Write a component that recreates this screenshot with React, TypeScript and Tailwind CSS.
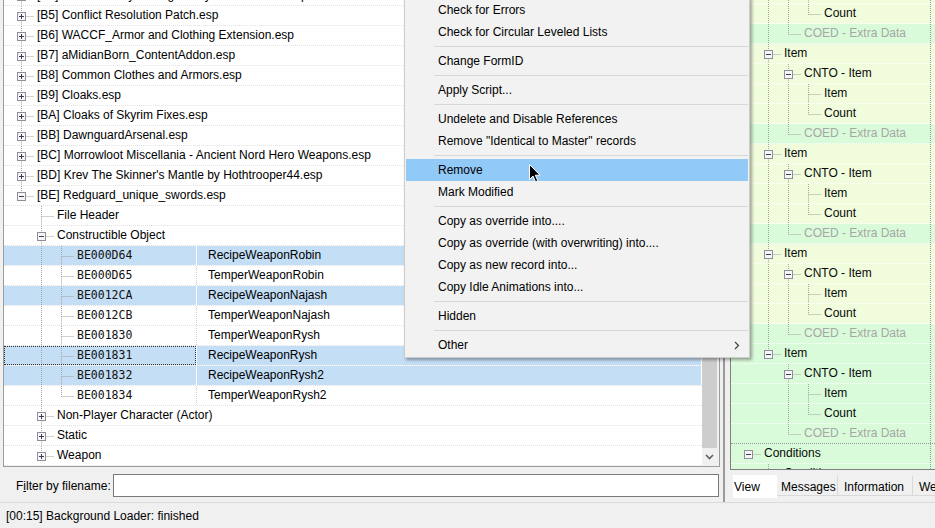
import React from "react";

type TRow = {
  l: number;
  t: string;
  box?: "plus" | "minus";
  last?: boolean;
  cont?: boolean[];
  noTop?: boolean;
  ed?: string;
  sel?: boolean;
  focus?: boolean;
  gray?: boolean;
  green?: boolean;
  sepDark?: boolean;
};

function Gutter({ r }: { r: TRow }) {
  const w = 33 + r.l * 20;
  const h = 19;
  const ci = (lv: number) => 17 + lv * 20;
  const cx = (lv: number) => ci(lv) + 0.5;
  const my = 10.5;
  const segs: React.ReactNode[] = [];
  (r.cont || []).forEach((c, i) => {
    if (c) segs.push(<line key={`c${i}`} x1={cx(i)} y1={0} x2={cx(i)} y2={h} />);
  });
  const x = cx(r.l);
  if (!r.noTop) segs.push(<line key="t" x1={x} y1={0} x2={x} y2={my} />);
  if (!r.last) segs.push(<line key="b" x1={x} y1={my} x2={x} y2={h} />);
  segs.push(<line key="h" x1={x} y1={my} x2={w - 3} y2={my} />);
  const c = ci(r.l);
  return (
    <svg width={w} height={h} className="shrink-0 block">
      <g stroke="#a3a3a3" strokeWidth={1} strokeDasharray="1 1">
        {segs}
      </g>
      {r.box && (
        <g>
          <rect x={c - 3.5} y={6.5} width={8} height={8} fill="#f6f6f6" stroke="#8e8f9a" />
          <line x1={c - 2} y1={my} x2={c + 3} y2={my} stroke="#3c3c5a" />
          {r.box === "plus" && <line x1={x} y1={8} x2={x} y2={13} stroke="#3c3c5a" />}
        </g>
      )}
    </svg>
  );
}

const rec = (t: string, ed: string, extra: Partial<TRow> = {}): TRow => ({
  l: 2,
  t,
  ed,
  cont: [false, true],
  ...extra,
});

const leftRows: TRow[] = [
  { l: 0, t: "[B4] Unofficial Skyrim Legendary Edition Patch.esp", box: "plus" },
  { l: 0, t: "[B5] Conflict Resolution Patch.esp", box: "plus" },
  { l: 0, t: "[B6] WACCF_Armor and Clothing Extension.esp", box: "plus" },
  { l: 0, t: "[B7] aMidianBorn_ContentAddon.esp", box: "plus" },
  { l: 0, t: "[B8] Common Clothes and Armors.esp", box: "plus" },
  { l: 0, t: "[B9] Cloaks.esp", box: "plus" },
  { l: 0, t: "[BA] Cloaks of Skyrim Fixes.esp", box: "plus" },
  { l: 0, t: "[BB] DawnguardArsenal.esp", box: "plus" },
  { l: 0, t: "[BC] Morrowloot Miscellania - Ancient Nord Hero Weapons.esp", box: "plus" },
  { l: 0, t: "[BD] Krev The Skinner's Mantle by Hothtrooper44.esp", box: "plus" },
  { l: 0, t: "[BE] Redguard_unique_swords.esp", box: "minus", last: true },
  { l: 1, t: "File Header", cont: [false] },
  { l: 1, t: "Constructible Object", box: "minus", cont: [false] },
  rec("BE000D64", "RecipeWeaponRobin", { sel: true }),
  rec("BE000D65", "TemperWeaponRobin"),
  rec("BE0012CA", "RecipeWeaponNajash", { sel: true }),
  rec("BE0012CB", "TemperWeaponNajash"),
  rec("BE001830", "TemperWeaponRysh"),
  rec("BE001831", "RecipeWeaponRysh", { sel: true, focus: true }),
  rec("BE001832", "RecipeWeaponRysh2", { sel: true }),
  rec("BE001834", "TemperWeaponRysh2", { last: true }),
  { l: 1, t: "Non-Player Character (Actor)", box: "plus", cont: [false] },
  { l: 1, t: "Static", box: "plus", cont: [false] },
  { l: 1, t: "Weapon", box: "plus", cont: [false], last: true },
];

function group(li: boolean, green: boolean): TRow[] {
  return [
    { l: 1, t: "Item", box: "minus", cont: [false], last: li, green },
    { l: 2, t: "CNTO - Item", box: "minus", cont: [false, !li], green },
    { l: 3, t: "Item", cont: [false, !li, true], green },
    { l: 3, t: "Count", cont: [false, !li, true], last: true, green },
    { l: 2, t: "COED - Extra Data", cont: [false, !li], last: true, gray: true, green: true, sepDark: li },
  ];
}

const rightRows: TRow[] = [
  { l: 3, t: "Item", cont: [false, true, true] },
  { l: 3, t: "Count", cont: [false, true, true], last: true },
  { l: 2, t: "COED - Extra Data", cont: [false, true], last: true, gray: true, green: true },
  ...group(false, false),
  ...group(false, false),
  ...group(false, false),
  ...group(true, true),
  { l: 0, t: "Conditions", box: "minus", noTop: true, last: true, green: true },
  { l: 1, t: "Condition", box: "minus", cont: [false], green: true },
];

function LeftRow({ r }: { r: TRow }) {
  const isRec = r.ed !== undefined;
  let c1 = "w-[192px] shrink-0 flex items-center";
  if (r.sel && r.focus) c1 = "w-[192px] shrink-0 flex items-center bg-[#c4def5] outline-1 outline-dotted outline-[#333333] -outline-offset-1";
  else if (r.sel) c1 = "w-[192px] shrink-0 flex items-center bg-[#c4def5]";
  return (
    <div className="h-[20px] flex border-b border-dotted border-[#e2e2e2]">
      <div className={c1}>
        <Gutter r={r} />
        <span
          className={
            isRec
              ? "whitespace-nowrap font-['DejaVu_Sans_Mono',monospace] text-[11.5px] text-[#111111]"
              : "whitespace-nowrap"
          }
        >
          {r.t}
        </span>
      </div>
      {isRec && (
        <>
          <div
            className={
              r.sel ? "w-[1px] shrink-0 bg-white" : "w-[1px] shrink-0 border-l border-dotted border-[#cfcfcf]"
            }
          />
          <div
            className={
              r.sel
                ? "flex-1 mr-[1px] pl-[11px] flex items-center whitespace-nowrap bg-[#c4def5]"
                : "flex-1 mr-[1px] pl-[11px] flex items-center whitespace-nowrap"
            }
          >
            {r.ed}
          </div>
        </>
      )}
    </div>
  );
}

function RightRow({ r }: { r: TRow }) {
  let cls = "h-[20px] flex border-b border-dotted border-white bg-[#f0fcdc]";
  if (r.green && r.sepDark) cls = "h-[20px] flex border-b border-dotted border-[#9a9a9a] bg-[#d9fbd9]";
  else if (r.green) cls = "h-[20px] flex border-b border-dotted border-white bg-[#d9fbd9]";
  return (
    <div className={cls}>
      <div className="w-[200px] shrink-0 flex items-center border-r border-dotted border-[#9a9a9a]">
        <Gutter r={r} />
        <span className={r.gray ? "whitespace-nowrap text-[#a6a6a6]" : "whitespace-nowrap text-[#0a0a0a]"}>
          {r.t}
        </span>
      </div>
      <div className="flex-1" />
    </div>
  );
}

const menuItems: (string | null)[] = [
  "Check for Errors",
  "Check for Circular Leveled Lists",
  null,
  "Change FormID",
  null,
  "Apply Script...",
  null,
  "Undelete and Disable References",
  'Remove "Identical to Master" records',
  null,
  "Remove",
  "Mark Modified",
  null,
  "Copy as override into....",
  "Copy as override (with overwriting) into....",
  "Copy as new record into...",
  "Copy Idle Animations into...",
  null,
  "Hidden",
  null,
  "Other",
];

function Menu() {
  return (
    <div className="absolute left-[404px] top-[-3px] w-[346px] bg-[#f2f2f2] border border-[#cccccc] p-[1px] shadow-[2px_2px_3px_rgba(0,0,0,0.35)] text-[12px] text-black">
      {menuItems.map((m, i) =>
        m === null ? (
          <div key={i} className="h-[7px] flex items-center pl-[28px]">
            <div className="h-[1px] flex-1 bg-[#d7d7d7]" />
          </div>
        ) : (
          <div
            key={i}
            className={
              m === "Remove"
                ? "h-[22px] pl-[32px] pr-[8px] leading-[22px] flex items-center justify-between bg-[#91c9f7]"
                : "h-[22px] pl-[32px] pr-[8px] leading-[22px] flex items-center justify-between"
            }
          >
            <span className="whitespace-nowrap">{m}</span>
            {m === "Other" && (
              <svg width="6" height="9" viewBox="0 0 6 9">
                <polyline points="1,1 4.5,4.5 1,8" fill="none" stroke="#404040" strokeWidth="1.2" />
              </svg>
            )}
          </div>
        )
      )}
    </div>
  );
}

function Cursor() {
  return (
    <svg className="absolute left-[529px] top-[164px]" width="13" height="20" viewBox="0 0 13 20">
      <path
        d="M0.5 0.5 L0.5 15.5 L4 12 L6.5 17.8 L8.8 16.8 L6.3 11.2 L11 11.2 Z"
        fill="#000000"
        stroke="#ffffff"
        strokeWidth="1"
        strokeLinejoin="miter"
      />
    </svg>
  );
}

export default function App() {
  return (
    <div className="relative w-[935px] h-[528px] overflow-hidden bg-[#f0f0f0] font-['Liberation_Sans',Arial,sans-serif] text-[12px] leading-[19px] text-black">
      <div className="flex h-[502px]">
        {/* Left column */}
        <div className="w-[720px] shrink-0 flex flex-col pl-[3px]">
          <div className="h-[467px] shrink-0 flex bg-white border-l border-r border-b border-[#9c9c9c] overflow-hidden">
            <div className="flex-1 overflow-hidden">
              <div className="mt-[-14px]">
                {leftRows.map((r, i) => (
                  <LeftRow key={i} r={r} />
                ))}
              </div>
            </div>
            <div className="w-[17px] shrink-0 flex flex-col bg-[#f0f0f0]">
              <div className="flex-1 w-[15px] bg-[#cdcdcd]" />
              <div className="h-[18px] flex items-center justify-center pr-[2px]">
                <svg width="9" height="6" viewBox="0 0 9 6">
                  <polyline points="1,1 4.5,4.5 8,1" fill="none" stroke="#606060" strokeWidth="1.6" />
                </svg>
              </div>
            </div>
          </div>
          <div className="flex items-start pt-[7px]">
            <div className="ml-[13px] w-[97px] h-[24px] flex items-center whitespace-nowrap">
              F<span className="underline">i</span>lter by filename:
            </div>
            <div className="w-[606px] h-[23px] bg-white border border-[#7a7a7a]" />
          </div>
        </div>

        {/* Right column */}
        <div className="flex-1 flex pl-[3px]">
          <div className="flex-1 flex flex-col border-l-2 border-[#9a9a9a] pl-[5px]">
            <div className="h-[470px] shrink-0 border-l border-b border-[#7f7f7f] overflow-hidden">
              <div className="mt-[-16px]">
                {rightRows.map((r, i) => (
                  <RightRow key={i} r={r} />
                ))}
              </div>
            </div>
            <div className="flex items-start mt-[4px] ml-[3px] h-[24px]">
              <div className="w-[44px] h-[23px] mt-[1px] bg-white pl-[1px] pt-[3px] leading-[19px] whitespace-nowrap">
                View
              </div>
              <div className="w-[61px] h-[20px] mt-[2px] pl-[4px] pt-[1px] leading-[20px] border-r border-b border-[#d9d9d9] whitespace-nowrap">
                Messages
              </div>
              <div className="w-[75px] h-[20px] mt-[2px] pl-[6px] pt-[1px] leading-[20px] border-r border-b border-[#d9d9d9] whitespace-nowrap">
                Information
              </div>
              <div className="w-[60px] h-[20px] mt-[2px] pl-[6px] pt-[1px] leading-[20px] border-b border-[#d9d9d9] whitespace-nowrap">
                Weapon
              </div>
            </div>
          </div>
        </div>
      </div>

      {/* Status bar */}
      <div className="h-[26px] border-t border-[#dadada] flex items-center pl-[6px] pt-[1px] whitespace-nowrap">
        [00:15] Background Loader: finished
      </div>

      <Menu />
      <Cursor />
    </div>
  );
}
